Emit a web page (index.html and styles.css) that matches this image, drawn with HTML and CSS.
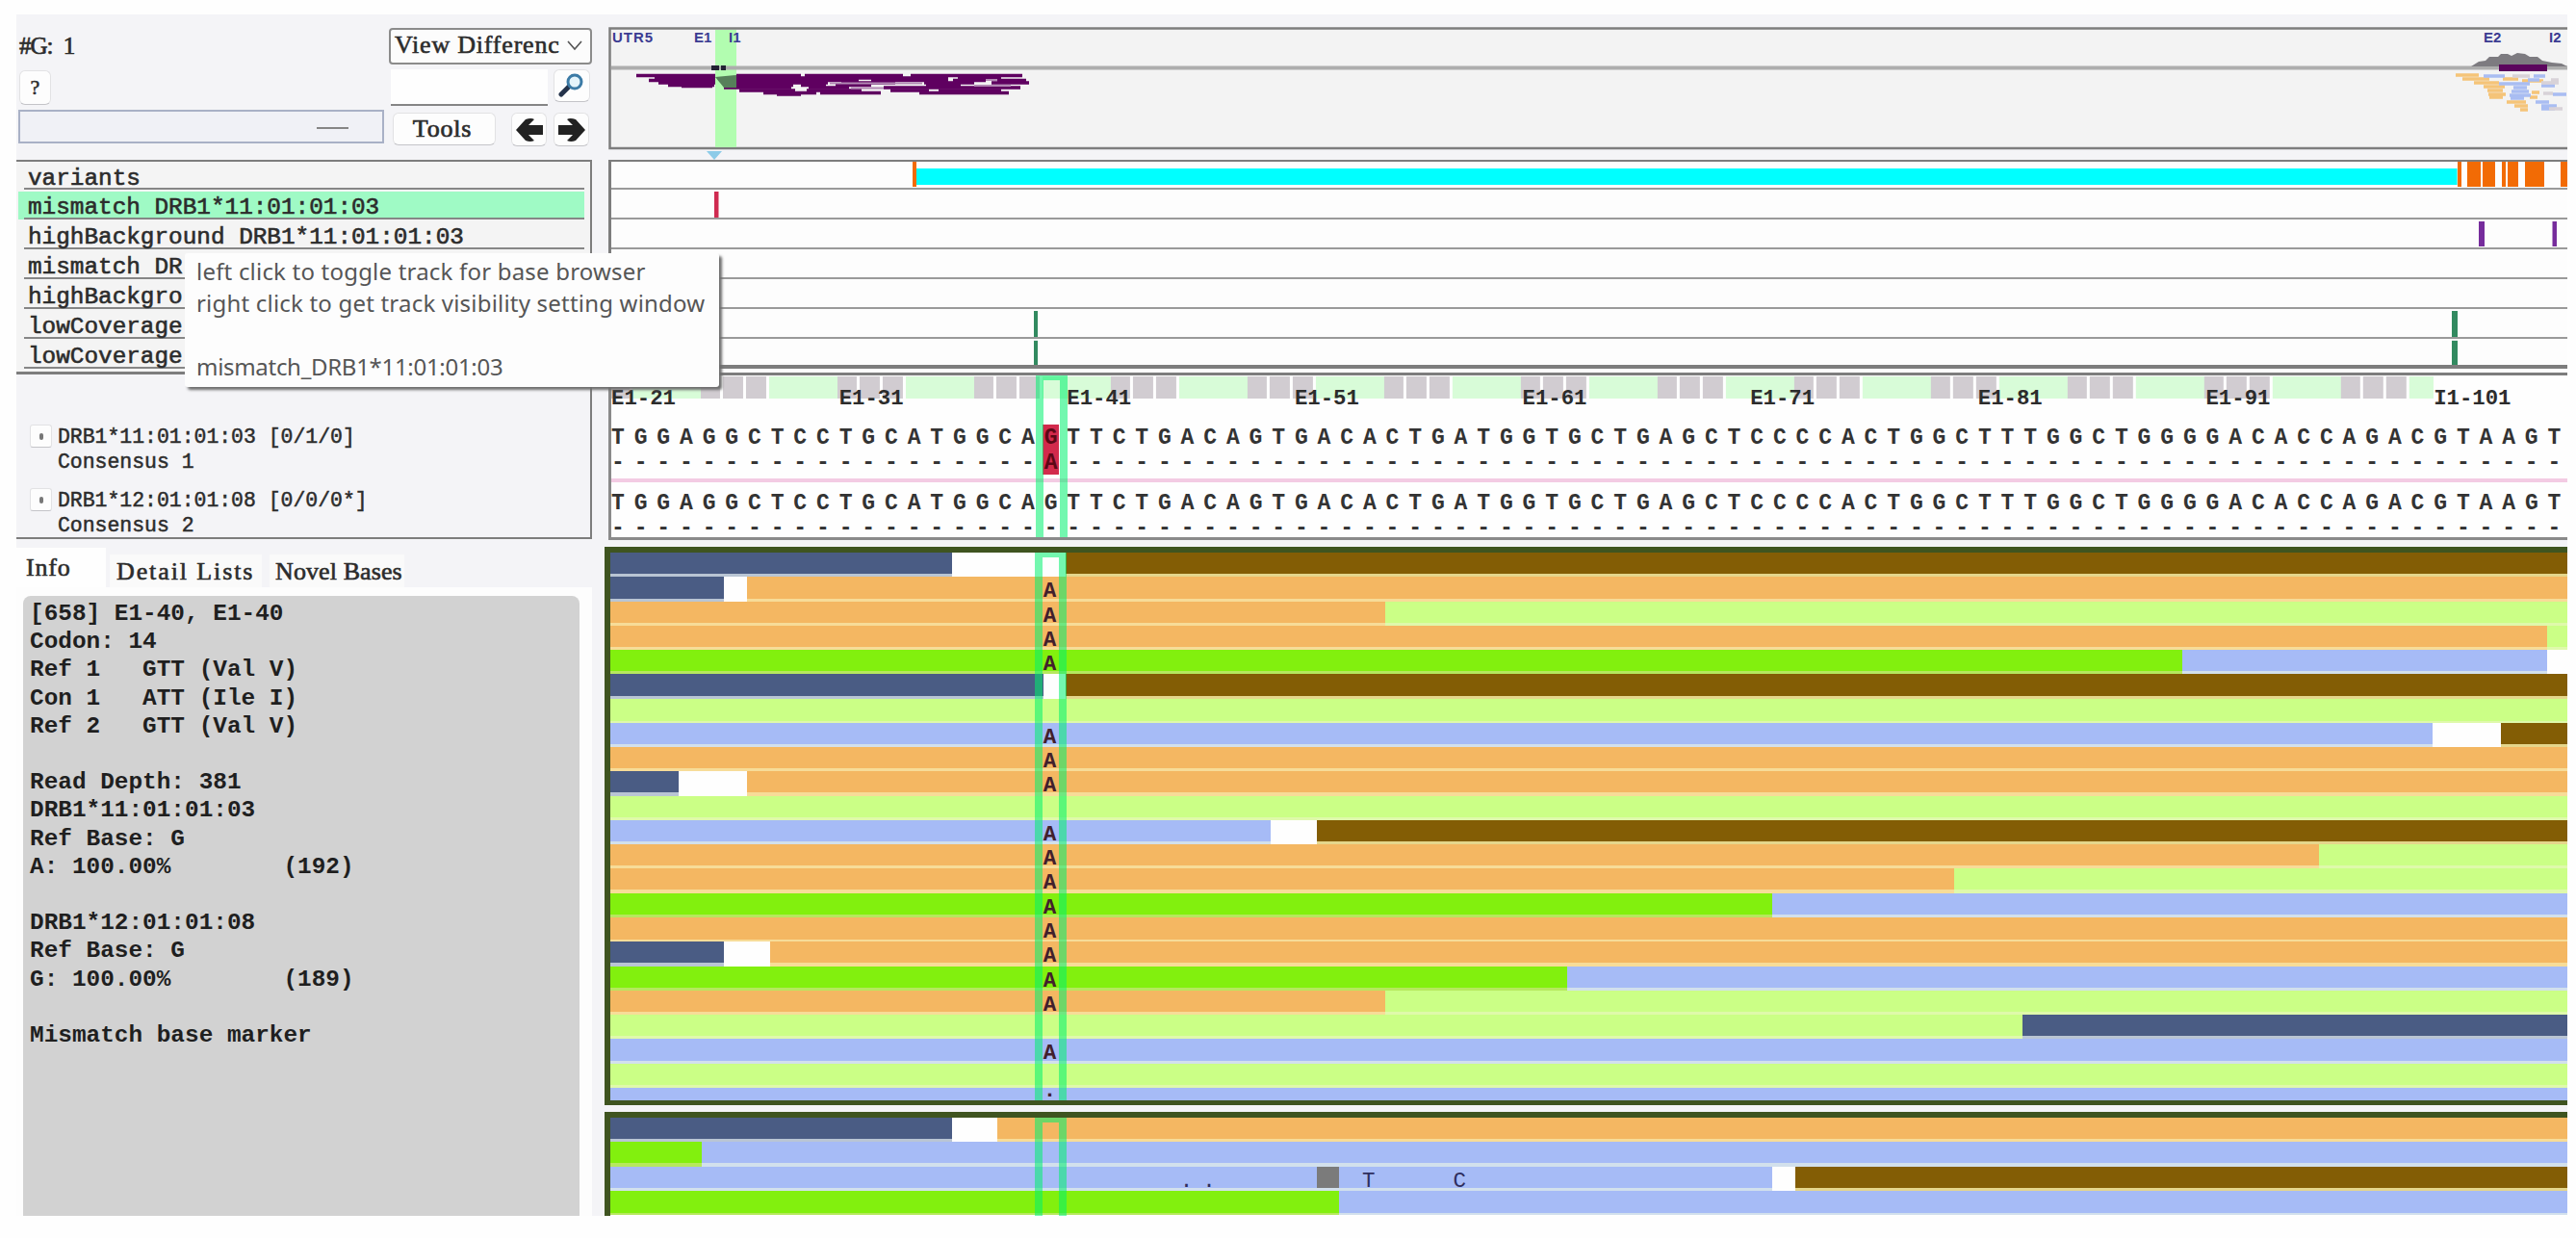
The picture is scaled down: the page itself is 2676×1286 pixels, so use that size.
FILE: index.html
```html
<!DOCTYPE html>
<html lang="en">
<head>
<meta charset="utf-8">
<title>Base browser</title>
<link rel="stylesheet" href="styles.css">
</head>
<body>
<main class="app">
  <aside class="side">
    <section class="toolbar">
      <div class="tb-left">
        <div class="sample">#G: 1</div>
        <button class="btn help">?</button>
        <div class="progress"><i></i></div>
      </div>
      <div class="tb-right">
        <div class="combo"><span>View Differenc</span>
          <svg width="18" height="12" viewBox="0 0 18 12"><path d="M2 2l7 8 7-8" fill="none" stroke="#555" stroke-width="1.6"/></svg>
        </div>
        <div class="search">
          <div class="field"></div>
          <button class="btn mag"><svg width="28" height="26" viewBox="0 0 28 26"><path d="M11 14L3 22" stroke="#23324a" stroke-width="5" stroke-linecap="round"/><circle cx="17" cy="9" r="7" fill="#e4f4fb" stroke="#3c7ba6" stroke-width="3"/></svg></button>
        </div>
        <div class="nav">
          <button class="btn tools">Tools</button>
          <button class="btn arrow"><svg width="30" height="26" viewBox="0 0 30 26"><path d="M1 13L11 2q6-2 9 0l-6 6h15v10H14l6 6q-4 2-9 0z" fill="#222"/></svg></button>
          <button class="btn arrow"><svg width="30" height="26" viewBox="0 0 30 26"><path d="M29 13L19 2q-6-2-9 0l6 6H1v10h15l-6 6q4 2 9 0z" fill="#222"/></svg></button>
        </div>
      </div>
    </section>
    <ul class="tracks">
      <li>variants</li>
      <li class="on">mismatch DRB1*11:01:01:03</li>
      <li>highBackground DRB1*11:01:01:03</li>
      <li>mismatch DR</li>
      <li>highBackgro</li>
      <li>lowCoverage</li>
      <li>lowCoverage</li>
    </ul>
    <section class="alleles">
      <div class="allele"><button class="btn mini"></button><div>DRB1*11:01:01:03 [0/1/0]<br>Consensus 1</div></div>
      <div class="allele"><button class="btn mini"></button><div>DRB1*12:01:01:08 [0/0/0*]<br>Consensus 2</div></div>
    </section>
    <nav class="tabs"><span class="tab active">Info</span><span class="tab t2">Detail Lists</span><span class="tab t3">Novel Bases</span></nav>
    <div class="pane"><pre class="info">[658] E1-40, E1-40
Codon: 14
Ref 1   GTT (Val V)
Con 1   ATT (Ile I)
Ref 2   GTT (Val V)

Read Depth: 381
DRB1*11:01:01:03
Ref Base: G
A: 100.00%        (192)

DRB1*12:01:01:08
Ref Base: G
G: 100.00%        (189)

Mismatch base marker</pre></div>
  </aside>

  <section class="view">
    <svg class="overview" viewBox="632 28 2035 138" width="2035" height="138">
      <rect x="633.5" y="29.5" width="2040" height="124.500" fill="#f3f3f3" stroke="#7d7d7d" stroke-width="2.500"/>
      <rect x="743" y="31" width="22" height="122" fill="#b2fdb0"/>
      <path d="M635 70.500H2667" stroke="#adadad" stroke-width="4"/>
      <g class="region"><text x="636" y="44" textLength="42">UTR5</text><text x="721" y="44">E1</text><text x="757" y="44">I1</text><text x="2580" y="44">E2</text><text x="2648" y="44">I2</text></g>
      <path d="M739 70.500h8M749 70.500h5" stroke="#223" stroke-width="5"/>
      <g stroke="#5f0060" stroke-width="3.300" fill="none">
        <path d="M661 78.500H743M765 78.500H832M836 78.500H938M946 78.500H1062M680 81H743M763 81H985M995 81H1040"/>
        <path d="M674 83.500H743M765 83.500H892M905 83.500H985M990 83.500H1024M1036 83.500H1066M684 86H743M765 86H860M874 86H930M960 86H1012M1030 86H1069"/>
        <path d="M694 88.500H742M765 88.500H824M832 88.500H858M868 88.500H905M962 88.500H998M708 89.500H740M752 91H822M840 91H882M918 91H1060"/>
        <path d="M768 94H826M838 94H895M925 94H965M975 94H1040M793 96.500H848M852 96.500H915M955 96.500H1048M807 98H832"/>
      </g>
      <path d="M743 80L765 78V91L752 91Z" fill="#56805a"/>
      <path d="M862 86.500H958M884 91.500H918M1024 83H1036M1012 89H1050" stroke="#b28ab4" stroke-width="2"/>
      <path d="M734 157h16l-8 9z" fill="#8ccbe8"/>
      <path d="M2567 69l8-5 7-1 4-4h9l3-3h7l4 2 6-3 8 1 5 3h8l5 4 10 2 10 1 6 3z" fill="#7d7b80"/>
      <rect x="2596" y="67" width="50" height="7" fill="#5b055d"/>
      <g fill="none" stroke-width="3.500">
        <path d="M2551 78h24M2558 82h28M2570 86h26M2580 90h22M2584 94h16M2585 98h18M2586 101h14M2604 106h20M2612 110h14M2618 114h8M2600 82h16M2630 96h8M2620 84h22M2628 101h8" stroke="#f5c478"/>
        <path d="M2580 79h22M2596 87h32M2611 91h14M2609 95h18M2607 99h22M2608 102h14M2632 79h12M2626 83h12M2652 98h14M2634 106h14M2640 110h16M2640 113h14M2640 89h14" stroke="#a9bdf2"/>
        <path d="M2610 79h18M2640 86h18M2650 83h8M2642 97h10M2648 113h14" stroke="#d8d2d8"/>
      </g>
    </svg>

    <div class="lanes">
      <svg viewBox="635 169 2032 27" preserveAspectRatio="none"><rect x="951.500" y="176" width="1601" height="17" fill="#0ff"/><g fill="#f26b05"><rect x="948" y="168" width="4" height="27"/><rect x="2553" y="168" width="4" height="27"/><rect x="2563" y="168" width="14" height="27"/><rect x="2579" y="168" width="13" height="27"/><rect x="2599" y="168" width="4" height="27"/><rect x="2605" y="168" width="11" height="27"/><rect x="2623" y="168" width="20" height="27"/><rect x="2660" y="168" width="7" height="27"/></g></svg>
      <svg viewBox="635 197 2032 29" preserveAspectRatio="none"><rect x="742" y="199" width="4.500" height="27" fill="#cf2a50"/></svg>
      <svg viewBox="635 228 2032 29" preserveAspectRatio="none"><g fill="#762c9c"><rect x="2575" y="230" width="6" height="26"/><rect x="2651.500" y="230" width="4.500" height="26"/></g></svg>
      <svg viewBox="635 259 2032 29"></svg>
      <svg viewBox="635 290 2032 29"></svg>
      <svg viewBox="635 321 2032 29" preserveAspectRatio="none"><g fill="#328a60"><rect x="1074" y="323" width="4" height="27"/><rect x="2547" y="323" width="6" height="27"/></g></svg>
      <svg viewBox="635 352 2032 29" preserveAspectRatio="none"><g fill="#328a60"><rect x="1074" y="354" width="4" height="27"/><rect x="2547" y="354" width="6" height="27"/></g></svg>
    </div>

    <div class="consensus">
      <div class="codons"></div>
      <div class="ruler"><span>E1-21</span><span>E1-31</span><span>E1-41</span><span>E1-51</span><span>E1-61</span><span>E1-71</span><span>E1-81</span><span>E1-91</span><span>I1-101</span></div>
      <div class="seq">TGGAGGCTCCTGCATGGCA<b>G</b>TTCTGACAGTGACACTGATGGTGCTGAGCTCCCCACTGGCTTTGGCTGGGGACACCAGACGTAAG<u>T</u></div>
      <div class="seq dash">-------------------<b>A</b>-----------------------------------------------------------------<u>-</u></div>
      <div class="divider"></div>
      <div class="seq">TGGAGGCTCCTGCATGGCAGTTCTGACAGTGACACTGATGGTGCTGAGCTCCCCACTGGCTTTGGCTGGGGACACCAGACGTAAG<u>T</u></div>
      <div class="seq dash">-------------------------------------------------------------------------------------<u>-</u></div>
      <div class="cursor"></div>
    </div>

    <div class="reads first">
      <div class="r"><i class="d" style="--n:15"></i><i class="w" style="--n:5"></i><i class="b"></i></div>
      <div class="r"><i class="d" style="--n:5"></i><i class="w" style="--n:1"></i><i class="o"></i><s style="--c:19">A</s></div>
      <div class="r"><i class="o" style="--n:34"></i><i class="l"></i><s style="--c:19">A</s></div>
      <div class="r"><i class="o" style="--n:85"></i><i class="l"></i><s style="--c:19">A</s></div>
      <div class="r"><i class="g" style="--n:69"></i><i class="p" style="--n:16"></i><i class="w"></i><s style="--c:19">A</s></div>
      <div class="r"><i class="d" style="--n:19"></i><i class="w" style="--n:1"></i><i class="b"></i></div>
      <div class="r"><i class="l"></i></div>
      <div class="r"><i class="p" style="--n:80"></i><i class="w" style="--n:3"></i><i class="b"></i><s style="--c:19">A</s></div>
      <div class="r"><i class="o"></i><s style="--c:19">A</s></div>
      <div class="r"><i class="d" style="--n:3"></i><i class="w" style="--n:3"></i><i class="o"></i><s style="--c:19">A</s></div>
      <div class="r"><i class="l"></i></div>
      <div class="r"><i class="p" style="--n:29"></i><i class="w" style="--n:2"></i><i class="b"></i><s style="--c:19">A</s></div>
      <div class="r"><i class="o" style="--n:75"></i><i class="l"></i><s style="--c:19">A</s></div>
      <div class="r"><i class="o" style="--n:59"></i><i class="l"></i><s style="--c:19">A</s></div>
      <div class="r"><i class="g" style="--n:51"></i><i class="p"></i><s style="--c:19">A</s></div>
      <div class="r"><i class="o"></i><s style="--c:19">A</s></div>
      <div class="r"><i class="d" style="--n:5"></i><i class="w" style="--n:2"></i><i class="o"></i><s style="--c:19">A</s></div>
      <div class="r"><i class="g" style="--n:42"></i><i class="p"></i><s style="--c:19">A</s></div>
      <div class="r"><i class="o" style="--n:34"></i><i class="l"></i><s style="--c:19">A</s></div>
      <div class="r"><i class="l" style="--n:62"></i><i class="d"></i></div>
      <div class="r"><i class="p"></i><s style="--c:19">A</s></div>
      <div class="r"><i class="l"></i></div>
      <div class="r cut"><i class="p"></i><s style="--c:19">.</s></div>
      <div class="cursor"></div>
    </div>
    <div class="reads second">
      <div class="r"><i class="d" style="--n:15"></i><i class="w" style="--n:2"></i><i class="o"></i></div>
      <div class="r"><i class="g" style="--n:4"></i><i class="p"></i></div>
      <div class="r"><i class="p" style="--n:31"></i><i class="x" style="--n:1"></i><i class="p" style="--n:19"></i><i class="w" style="--n:1"></i><i class="b"></i><s class="n" style="--c:25">.</s><s class="n" style="--c:26">.</s><s class="n" style="--c:33">T</s><s class="n" style="--c:37">C</s></div>
      <div class="r"><i class="g" style="--n:32"></i><i class="p"></i></div>
      <div class="cursor"></div>
    </div>
  </section>
</main>
<div class="tooltip">left click to toggle track for base browser<br>right click to get track visibility setting window<br><br><span>mismatch_DRB1*11:01:01:03</span></div>
</body>
</html>
```

FILE: styles.css
```css
* { box-sizing: border-box; }
body {
  margin: 0;
  width: 2676px;
  height: 1286px;
  overflow: hidden;
  background: #fefefe;
  color: #2c2c2c;
  font-family: "Liberation Mono", monospace;
}
.app {
  display: flex;
  justify-content: space-between;
  width: 2650px;
  height: 1248px;
  margin: 15px 9px 0 17px;
  background: #f4f4f7;
  overflow: hidden;
}
.side { width: 598px; display: flex; flex-direction: column; }
.btn {
  border: 1px solid #e2e2e4;
  border-bottom-color: #c4c4c8;
  border-radius: 6px;
  background: #fdfdfd;
  padding: 0;
  display: flex;
  align-items: center;
  justify-content: center;
  color: #2c2c2c;
}

/* toolbar */
.toolbar { height: 151px; padding: 14px 0 0 2px; display: flex; justify-content: space-between; }
.tb-left { width: 380px; }
.sample { height: 44px; font: 25px/37px "Liberation Serif", serif; -webkit-text-stroke: .7px; white-space: pre; letter-spacing: -1px; word-spacing: 6px; padding-left: 1px; }
.help { width: 33px; height: 36px; font: 22px "Liberation Serif", serif; -webkit-text-stroke: .5px; margin-left: 1px; }
.progress { margin-top: 5px; height: 35px; border: 2px solid #a9b1c6; background: #f0f1f6; padding: 16px 0 0 308px; }
.progress i { display: block; width: 33px; height: 2px; background: #858585; }
.tb-right { width: 211px; }
.combo {
  height: 38px;
  border: 2px solid #8b8b8b;
  border-radius: 4px;
  background: #fcfcfc;
  display: flex;
  align-items: center;
  justify-content: space-between;
  padding: 0 7px 2px 4px;
  font: 26px "Liberation Serif", serif;
  letter-spacing: .8px;
  white-space: nowrap;
  -webkit-text-stroke: .6px;
}
.search { display: flex; justify-content: space-between; margin-top: 5px; padding-left: 2px; }
.field { width: 163px; height: 38px; background: #fefefe; border-bottom: 2px solid #858585; }
.mag { width: 38px; height: 34px; margin-right: 2px; }
.nav { display: flex; margin-top: 7px; padding-left: 4px; }
.tools { width: 107px; height: 34px; padding-right: 4px; font: 26px "Liberation Serif", serif; letter-spacing: .8px; -webkit-text-stroke: .7px; }
.arrow { width: 37px; height: 35px; margin-left: 7px; }
.tools + .arrow { margin-left: 16px; }

/* track names */
.tracks {
  margin: 0;
  padding: 0 6px 0 2px;
  list-style: none;
  height: 224px;
  border: 2px solid #7d7d7d;
  border-left: 0;
  border-bottom-width: 3px;
  background: #f4f4f4;
}
.tracks li {
  height: 31px;
  line-height: 38px;
  overflow: hidden;
  padding-left: 10px;
  font-size: 24.35px;
  -webkit-text-stroke: .6px;
  background: linear-gradient(#868686, #868686) 6px 100% / 100% 2px no-repeat;
}
.tracks li:first-child { height: 29px; line-height: 36px; }
.tracks li.on { background-color: #9ffac5; box-shadow: inset 0 2px #f4f4f4; }

/* allele names */
.alleles { height: 171px; padding: 52px 0 0 14px; border: solid #7d7d7d; border-width: 0 2px 2px 0; }
.allele { display: flex; height: 66px; font-size: 21.45px; line-height: 26px; -webkit-text-stroke: .5px; }
.mini { width: 23px; height: 24px; margin: 0 6px 0 0; border-radius: 3px; }
.mini::before { content: ""; width: 4px; height: 7px; background: #777; border-radius: 2px; }

/* tabs and info */
.tabs { display: flex; height: 50px; padding-top: 9px; font: 26px/38px "Liberation Serif", serif; -webkit-text-stroke: .6px; align-items: flex-end; }
.tab { height: 34px; line-height: 35px; background: #fafafa; white-space: nowrap; }
.tab.active { width: 93px; height: 41px; line-height: 41px; padding-left: 10px; background: #fefefe; letter-spacing: .8px; }
.t2 { width: 158px; margin-left: 4px; padding-left: 7px; letter-spacing: 1.9px; }
.t3 { width: 140px; margin-left: 8px; padding-left: 6px; letter-spacing: .1px; }
.pane { flex: 1; padding: 9px 13px 0 7px; background: #fdfdfd; }
.info {
  margin: 0;
  height: 644px;
  padding: 4px 7px;
  border-radius: 8px 8px 0 0;
  background: #d2d2d2;
  color: #1f1f1f;
  font: bold 24.4px/29.2px "Liberation Mono", monospace;
}

/* right side */
.view { --cell: 23.665px; width: 2039px; padding: 13px 0 0 0; }
.overview { display: block; margin-left: 4px; }
.region text { font: bold 15px "Liberation Sans", sans-serif; fill: #3b3b92; }
.lanes {
  margin-left: 4px;
  height: 224px;
  border: solid #7d7d7d;
  border-width: 2px 0 3px 3px;
  background: #fdfdfd;
}
.lanes svg { display: block; width: 2032px; height: 31px; border-bottom: 2px solid #9a9a9a; }
.lanes svg:first-child { height: 29px; }
.lanes svg:last-child { border-bottom: 4px solid #7d7d7d; }

.consensus {
  position: relative;
  margin-left: 4px;
  height: 171px;
  border: solid #8a8a8a;
  border-width: 0 0 3px 3px;
  background: #fefefe;
}
.codons {
  height: 24px;
  border-top: 1px solid #fefefe;
  width: calc(80 * var(--cell));
  background:
    linear-gradient(90deg,
      #d1ccd1 0 calc(.87 * var(--cell)), #fefefe 0 var(--cell),
      #d8fcd8 0 calc(4 * var(--cell)),
      #d1ccd1 0 calc(4.87 * var(--cell)), #fefefe 0 calc(5 * var(--cell)),
      #d1ccd1 0 calc(5.87 * var(--cell)), #fefefe 0 calc(6 * var(--cell))) -2px 0 / calc(6 * var(--cell)) 100%;
}
.ruler { display: flex; height: 24px; margin-top: -12px; font-size: 22.3px; line-height: 24px; font-weight: bold; }
.ruler span { flex: none; width: calc(10 * var(--cell)); }
.ruler span:last-child { width: auto; }
.seq {
  height: 26px;
  margin-top: 15px;
  font: bold 23px/28px "Liberation Mono", monospace;
  letter-spacing: calc(var(--cell) - 13.802px);
  white-space: nowrap;
  color: #333;
}
.seq.dash { margin-top: 0; }
.seq u { letter-spacing: 0; text-decoration: none; }
.seq b { display: inline-block; width: 17px; height: 26px; margin: 0 calc(var(--cell) - 15px) 0 -2px; padding-left: 2px; letter-spacing: 0; background: #d22a4c; color: #5c0716; vertical-align: top; }
.divider { height: 4px; margin-top: 4px; background: #f3cbe3; }
.divider + .seq { margin-top: 8px; }
.cursor {
  position: absolute;
  top: 0;
  bottom: 0;
  left: calc(19 * var(--cell) - 9px);
  width: 33px;
  border: 8px solid rgba(0, 240, 110, .55);
  border-top-width: 5px;
  border-bottom: 0;
}

.reads { position: relative; border: solid #3f5420; border-width: 6px 0 0 6px; overflow: hidden; background: #fefefe; }
.reads.first { margin-top: 7px; height: 580px; border-bottom-width: 5px; }
.reads.second { margin-top: 7px; height: 109px; }
.r { position: relative; display: flex; height: 25.28px; }
.r i { --n: 0; flex: none; width: calc(var(--n) * var(--cell)); background: linear-gradient(var(--c1) 22.5px, var(--c2) 22.5px); }
.r i:last-of-type { flex: 1; }
.r .d { --c1: #4a5c84; --c2: #b9c5d4; }
.r .w { --c1: #fefefe; --c2: #fefefe; }
.r .b { --c1: #835d05; --c2: #e5d68c; }
.r .o { --c1: #f4b762; --c2: #f7dc98; }
.r .l { --c1: #cbff86; --c2: #dff9ab; }
.r .g { --c1: #82f00e; --c2: #b6e85e; }
.r .p { --c1: #a6bbf6; --c2: #d2e0ec; }
.r .x { --c1: #7b7b7b; --c2: #d2e0ec; }
.r s {
  position: absolute;
  z-index: 1;
  left: calc(var(--c) * var(--cell));
  top: 3px;
  font: bold 22.5px/25px "Liberation Mono", monospace;
  text-decoration: none;
  color: #42202c;
}
.r s.n { color: #2e2e5e; font-weight: normal; }
.r.cut s { top: -9px; }

.tooltip {
  position: absolute;
  left: 192px;
  top: 263px;
  width: 555px;
  height: 139px;
  padding: 2px 0 0 12px;
  background: #fdfdfd;
  border-radius: 3px;
  box-shadow: 3px 3px 3px #6d6d6d;
  color: #565656;
  font: 24px/33px "Noto Sans", sans-serif;
  letter-spacing: .2px;
  white-space: nowrap;
}
.tooltip span { letter-spacing: -.3px; }
```
